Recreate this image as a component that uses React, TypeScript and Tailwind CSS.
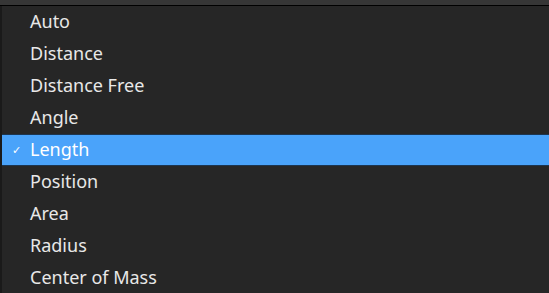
const items = [
  "Auto",
  "Distance",
  "Distance Free",
  "Angle",
  "Length",
  "Position",
  "Area",
  "Radius",
  "Center of Mass",
];

const selected = "Length";

export default function App() {
  return (
    <div
      className="w-[549px] h-[293px] overflow-hidden bg-[#333333] flex flex-col"
      style={{ fontFamily: '"Noto Sans", "Open Sans", sans-serif' }}
    >
      <div className="h-[5px] shrink-0 bg-[#363636]" />
      <div className="h-px shrink-0 bg-black" />
      <ul className="flex-1 flex flex-col bg-[#262626] border-l-2 border-[#1a1a1a]">
        {items.map((item) => {
          const active = item === selected;
          return (
            <li
              key={item}
              className={
                active
                  ? "h-[32px] shrink-0 flex items-center bg-[#4aa3fa] border-y border-[#1c3550] text-white"
                  : "h-[32px] shrink-0 flex items-center text-[#e8e8e8]"
              }
            >
              <span className="w-[28px] pl-[10px] text-[11px]">{active ? "✓" : ""}</span>
              <span className="text-[18px] leading-none -mt-[3px]">{item}</span>
            </li>
          );
        })}
      </ul>
    </div>
  );
}
